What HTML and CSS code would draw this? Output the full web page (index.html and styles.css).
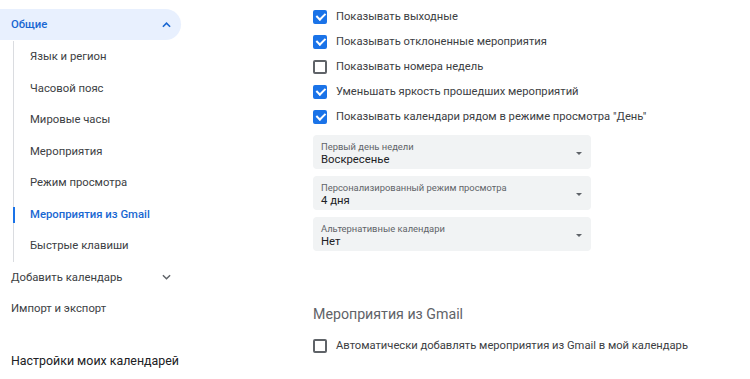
FILE: index.html
```html
<!DOCTYPE html>
<html lang="ru">
<head>
  <meta charset="UTF-8" />
  <meta name="viewport" content="width=device-width, initial-scale=1.0"/>
  <title>Настройки календаря</title>
  <link rel="stylesheet" href="styles.css">
</head>
<body>

  <div class="page">

    <!-- Боковое меню -->
    <nav class="sidebar">
      <div class="nav-group active">
        <span>Общие</span>
        <svg class="chevron" viewBox="0 0 10 6" width="9" height="6"><path d="M1 5 L5 1 L9 5" /></svg>
      </div>
      <div class="sub-list">
        <div class="sub-item">Язык и регион</div>
        <div class="sub-item">Часовой пояс</div>
        <div class="sub-item">Мировые часы</div>
        <div class="sub-item">Мероприятия</div>
        <div class="sub-item">Режим просмотра</div>
        <div class="sub-item current">Мероприятия из Gmail</div>
        <div class="sub-item">Быстрые клавиши</div>
      </div>
      <div class="nav-group">
        <span>Добавить календарь</span>
        <svg class="chevron" viewBox="0 0 10 6" width="9" height="6"><path d="M1 1 L5 5 L9 1" /></svg>
      </div>
      <div class="nav-group">
        <span>Импорт и экспорт</span>
      </div>
      <div class="nav-title">Настройки моих календарей</div>
    </nav>

    <!-- Основные настройки -->
    <main class="content">
      <div class="options">
        <label class="option"><span class="box checked"></span>Показывать выходные</label>
        <label class="option"><span class="box checked"></span>Показывать отклоненные мероприятия</label>
        <label class="option"><span class="box"></span>Показывать номера недель</label>
        <label class="option"><span class="box checked"></span>Уменьшать яркость прошедших мероприятий</label>
        <label class="option"><span class="box checked"></span>Показывать календари рядом в режиме просмотра "День"</label>
      </div>

      <div class="selects">
        <div class="select">
          <div class="select-text">
            <span class="select-label">Первый день недели</span>
            <span class="select-value">Воскресенье</span>
          </div>
          <span class="arrow"></span>
        </div>
        <div class="select">
          <div class="select-text">
            <span class="select-label">Персонализированный режим просмотра</span>
            <span class="select-value">4 дня</span>
          </div>
          <span class="arrow"></span>
        </div>
        <div class="select">
          <div class="select-text">
            <span class="select-label">Альтернативные календари</span>
            <span class="select-value">Нет</span>
          </div>
          <span class="arrow"></span>
        </div>
      </div>

      <h2 class="section-title">Мероприятия из Gmail</h2>
      <label class="option"><span class="box"></span>Автоматически добавлять мероприятия из Gmail в мой календарь</label>
    </main>

  </div>

</body>
</html>
```

FILE: styles.css
```css
body {
  margin: 0;
  font-family: Roboto, "Liberation Sans", Arial, sans-serif;
  color: #3c4043;
  background: #fff;
}

.page {
  display: flex;
}

/* Боковое меню */
.sidebar {
  width: 181px;
  padding-top: 9px;
  font-size: 11.3px;
}

.nav-group {
  display: flex;
  align-items: center;
  justify-content: space-between;
  height: 31.5px;
  padding: 0 10px 0 11px;
  border-radius: 0 16px 16px 0;
}

.nav-group.active {
  height: 31px;
  background: #e8f0fe;
  color: #1967d2;
  font-weight: 500;
}

.chevron {
  fill: none;
  stroke: #5f6368;
  stroke-width: 1.6;
}

.nav-group.active .chevron {
  stroke: #1967d2;
  stroke-width: 1.8;
}

.sub-list {
  margin: 1px 0 0 13px;
  border-left: 1px solid #dadce0;
}

.sub-item {
  position: relative;
  display: flex;
  align-items: center;
  height: 31.5px;
  padding-left: 16px;
}

.sub-item.current {
  color: #1967d2;
  font-weight: 500;
}

/* полоска текущего пункта */
.sub-item.current::before {
  content: "";
  position: absolute;
  left: -1px;
  top: 8px;
  width: 2px;
  height: 16px;
  background: #1a73e8;
}

.nav-title {
  padding: 28px 0 0 11px;
  font-size: 12.4px;
  color: #202124;
}

/* Основные настройки */
.content {
  margin-left: 132px;
  padding-top: 4px;
  font-size: 11.2px;
}

.option {
  display: flex;
  align-items: center;
  gap: 9px;
  height: 25px;
}

.box {
  box-sizing: border-box;
  width: 14px;
  height: 14px;
  border: 2px solid #5f6368;
  border-radius: 2px;
  position: relative;
}

.box.checked {
  background: #1a73e8;
  border-color: #1a73e8;
}

/* галочка */
.box.checked::after {
  content: "";
  position: absolute;
  left: 2.5px;
  top: -0.5px;
  width: 3.5px;
  height: 7px;
  border: solid #fff;
  border-width: 0 2px 2px 0;
  transform: rotate(45deg);
}

.selects {
  display: flex;
  flex-direction: column;
  gap: 7px;
  margin-top: 6px;
  width: 278px;
}

.select {
  display: flex;
  align-items: center;
  justify-content: space-between;
  box-sizing: border-box;
  height: 34px;
  padding: 2px 8px 0;
  background: #f1f3f4;
  border-radius: 4px;
}

.select-text {
  display: flex;
  flex-direction: column;
}

.select-label {
  font-size: 9.4px;
  color: #5f6368;
  line-height: 13px;
}

.select-value {
  font-size: 11.3px;
  color: #202124;
  line-height: 14px;
}

.arrow {
  width: 0;
  height: 0;
  margin-right: 1px;
  border-left: 3.5px solid transparent;
  border-right: 3.5px solid transparent;
  border-top: 3.5px solid #5f6368;
}

.section-title {
  margin: 53px 0 9px;
  font-size: 14.2px;
  font-weight: 400;
  color: #5f6368;
  line-height: 20px;
}
```
